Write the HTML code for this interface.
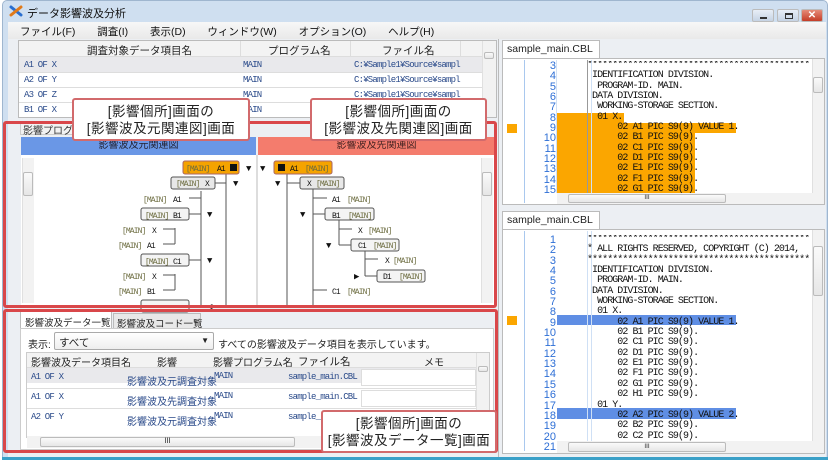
<!DOCTYPE html>
<html><head><meta charset="utf-8">
<style>
*{margin:0;padding:0;box-sizing:border-box}
body{width:832px;height:468px;background:#fff;position:relative;overflow:hidden;font-family:"Liberation Sans","Noto Sans CJK JP",sans-serif;font-size:10px;color:#222}
.a{position:absolute}
.mono{font-family:"Liberation Mono","Noto Sans CJK JP",monospace;font-size:9px;letter-spacing:-0.8px;color:#2a4a8a;line-height:11px}
.red{border:3px solid #d9474a;border-radius:3px}
.call{background:#fff;border:2px solid #d26a6c;border-radius:3px;font-size:13.5px;line-height:17px;text-align:center;color:#222;letter-spacing:0.5px}
.hd{background:#f3f3f3;border-bottom:1px solid #ddd;font-size:10px;color:#333}
.code{font-family:"Liberation Mono",monospace;font-size:10px;letter-spacing:-0.95px;line-height:10.35px;white-space:pre;color:#111}
.ln{font-family:"Liberation Sans",sans-serif;font-size:11px;line-height:10.35px;color:#2e6fd6;text-align:right;width:20px}
.sb{background:#f2f2f2;border-left:1px solid #e0e0e0}
.th{background:linear-gradient(#fafafa,#e6e6e6);border:1px solid #bbb;border-radius:2px}
</style></head><body>
<div class="a" style="left:2px;top:0;width:826px;height:460px;background:#cfdff0;border:1px solid #9fb6cf;border-radius:5px 5px 0 0"></div>
<svg class="a" style="left:9px;top:5px" width="14" height="12"><g stroke-width="3" stroke-linecap="round"><line x1="2" y1="2" x2="12" y2="10" stroke="#2a6fd0"/><line x1="12" y1="2" x2="2" y2="10" stroke="#e07a1a"/></g></svg>
<div class="a" style="left:27px;top:5px;font-size:11px;color:#111">データ影響波及分析</div>
<div class="a th" style="left:752px;top:9px;width:22px;height:13px;background:linear-gradient(#e8eef6,#c5d3e4)"><div class="a" style="left:7px;top:7px;width:7px;height:2px;background:#333"></div></div>
<div class="a th" style="left:777px;top:9px;width:22px;height:13px;background:linear-gradient(#e8eef6,#c5d3e4)"><div class="a" style="left:7px;top:3px;width:8px;height:6px;border:1px solid #333;border-top-width:2px"></div></div>
<div class="a th" style="left:801px;top:9px;width:22px;height:13px;background:linear-gradient(#e58a78,#c43d28);color:#fff;font-size:10px;text-align:center;line-height:11px;font-weight:bold">✕</div>
<div class="a" style="left:8px;top:22px;width:818px;height:17px;background:linear-gradient(#f7f7f7,#e9e9e9)"></div>
<div class="a" style="left:20px;top:24px;font-size:10.5px;color:#111;word-spacing:8px;white-space:pre">ファイル(F)  調査(I)  表示(D)  ウィンドウ(W)  オプション(O)  ヘルプ(H)</div>
<div class="a" style="left:8px;top:39px;width:818px;height:418px;background:#eceff3"></div>
<div class="a" style="left:18px;top:40px;width:479px;height:78px;background:#fff;border:1px solid #bbb"></div>
<div class="a hd" style="left:19px;top:41px;width:463px;height:16px"></div>
<div class="a" style="left:87px;top:43px;font-size:10.5px">調査対象データ項目名</div>
<div class="a" style="left:268px;top:43px;font-size:10.5px">プログラム名</div>
<div class="a" style="left:382px;top:43px;font-size:10.5px">ファイル名</div>
<div class="a" style="left:240px;top:41px;width:1px;height:16px;background:#ddd"></div>
<div class="a" style="left:350px;top:41px;width:1px;height:16px;background:#ddd"></div>
<div class="a" style="left:460px;top:41px;width:1px;height:16px;background:#ddd"></div>
<div class="a" style="left:19px;top:57px;width:463px;height:15px;background:#e9e9ec"></div>
<div class="a" style="left:19px;top:72px;width:463px;height:1px;background:#ddd"></div>
<div class="a" style="left:19px;top:87px;width:463px;height:1px;background:#ddd"></div>
<div class="a" style="left:19px;top:102px;width:463px;height:1px;background:#ddd"></div>
<div class="a mono" style="left:24px;top:60px">A1 OF X</div><div class="a mono" style="left:243px;top:60px">MAIN</div><div class="a mono" style="left:354px;top:60px">C:¥Sample1¥Source¥sampl</div>
<div class="a mono" style="left:24px;top:75px">A2 OF Y</div><div class="a mono" style="left:243px;top:75px">MAIN</div><div class="a mono" style="left:354px;top:75px">C:¥Sample1¥Source¥sampl</div>
<div class="a mono" style="left:24px;top:90px">A3 OF Z</div><div class="a mono" style="left:243px;top:90px">MAIN</div><div class="a mono" style="left:354px;top:90px">C:¥Sample1¥Source¥sampl</div>
<div class="a mono" style="left:24px;top:105px">B1 OF X</div><div class="a mono" style="left:243px;top:105px">MAIN</div>
<div class="a sb" style="left:482px;top:41px;width:14px;height:76px"></div>
<div class="a th" style="left:484px;top:52px;width:10px;height:7px"></div>
<div class="a" style="left:8px;top:120px;width:488px;height:188px;background:#eceff3"></div>
<div class="a" style="left:20px;top:121px;width:60px;height:14px;font-size:10px;color:#333;background:#f2f2f2;border:1px solid #ccc;padding-left:2px">影響プログラ</div>
<div class="a" style="left:21px;top:137px;width:235px;height:18px;background:#6a97e6;text-align:center;font-size:10px;line-height:18px;color:#223">影響波及元関連図</div>
<div class="a" style="left:258px;top:137px;width:237px;height:18px;background:#f47c6d;text-align:center;font-size:10px;line-height:18px;color:#422">影響波及先関連図</div>
<div class="a" style="left:21px;top:155px;width:474px;height:150px;background:#fff"></div>
<div class="a" style="left:256px;top:155px;width:2px;height:150px;background:#ddd"></div>
<div class="a sb" style="left:22px;top:158px;width:12px;height:145px"></div>
<div class="a th" style="left:23px;top:172px;width:10px;height:24px"></div>
<div class="a sb" style="left:481px;top:158px;width:12px;height:145px"></div>
<div class="a th" style="left:482px;top:172px;width:10px;height:24px"></div>
<svg class="a" style="left:0;top:0" width="832" height="468" font-family="Liberation Mono, monospace" font-size="8" letter-spacing="-0.9">
<g stroke="#555" stroke-width="1" fill="none">
<line x1="201" y1="191" x2="201" y2="305"/><line x1="226" y1="174" x2="226" y2="305"/>
<line x1="175" y1="228" x2="175" y2="244"/><line x1="175" y1="274" x2="175" y2="290"/>
<line x1="189" y1="198" x2="201" y2="198"/><line x1="189" y1="214" x2="201" y2="214"/><line x1="189" y1="260" x2="201" y2="260"/>
<line x1="215" y1="183" x2="226" y2="183"/>
<line x1="163" y1="229" x2="175" y2="229"/><line x1="163" y1="244" x2="175" y2="244"/>
<line x1="163" y1="275" x2="175" y2="275"/><line x1="163" y1="290" x2="175" y2="290"/>
<line x1="287" y1="174" x2="287" y2="305"/><line x1="313" y1="189" x2="313" y2="305"/>
<line x1="287" y1="183" x2="300" y2="183"/>
<line x1="313" y1="198" x2="327" y2="198"/><line x1="313" y1="214" x2="325" y2="214"/>
<line x1="313" y1="290" x2="327" y2="290"/>
<line x1="339" y1="220" x2="339" y2="245"/><line x1="339" y1="229" x2="352" y2="229"/><line x1="339" y1="245" x2="351" y2="245"/>
<line x1="365" y1="251" x2="365" y2="276"/><line x1="365" y1="259" x2="378" y2="259"/><line x1="365" y1="276" x2="377" y2="276"/>
</g>
<g stroke="#555" fill="#f4f4f4">
<rect x="171" y="177" width="44" height="12" rx="2" fill="#e8e8e8"/>
<rect x="141" y="208" width="48" height="12" rx="2"/>
<rect x="141" y="254" width="48" height="12" rx="2"/>
<rect x="141" y="300" width="48" height="12" rx="2"/>
<rect x="300" y="177" width="44" height="12" rx="2" fill="#e8e8e8"/>
<rect x="325" y="208" width="49" height="12" rx="2"/>
<rect x="351" y="239" width="48" height="12" rx="2"/>
<rect x="377" y="270" width="48" height="12" rx="2"/>
</g>
<rect x="183" y="161" width="56" height="13" rx="2" fill="#f5a300" stroke="#a66"/>
<rect x="274" y="161" width="58" height="13" rx="2" fill="#f5a300" stroke="#a66"/>
<rect x="230" y="164" width="7" height="7" fill="#111"/><rect x="278" y="164" width="7" height="7" fill="#111"/>
<g fill="#111" font-size="9" letter-spacing="0">
<text x="246" y="171">▼</text><text x="260" y="171">▼</text>
<text x="233" y="186">▼</text><text x="275" y="186">▼</text>
<text x="207" y="217">▼</text><text x="300" y="217">▼</text>
<text x="207" y="263">▼</text><text x="326" y="248">▼</text>
<text x="354" y="279">▶</text><text x="207" y="309">◀</text>
</g>
<g fill="#6b6b3e">
<text x="186" y="171">[MAIN]</text><text x="176" y="186">[MAIN]</text><text x="143" y="202">[MAIN]</text>
<text x="145" y="218">[MAIN]</text><text x="122" y="233">[MAIN]</text><text x="118" y="248">[MAIN]</text>
<text x="145" y="264">[MAIN]</text><text x="122" y="279">[MAIN]</text><text x="118" y="294">[MAIN]</text>
<text x="305" y="171">[MAIN]</text><text x="316" y="186">[MAIN]</text><text x="347" y="202">[MAIN]</text>
<text x="348" y="218">[MAIN]</text><text x="368" y="233">[MAIN]</text><text x="373" y="248">[MAIN]</text>
<text x="393" y="263">[MAIN]</text><text x="399" y="279">[MAIN]</text><text x="347" y="294">[MAIN]</text>
</g>
<g fill="#111">
<text x="217" y="171">A1</text><text x="205" y="186">X</text><text x="173" y="202">A1</text>
<text x="173" y="218">B1</text><text x="152" y="233">X</text><text x="147" y="248">A1</text>
<text x="173" y="264">C1</text><text x="152" y="279">X</text><text x="147" y="294">B1</text>
<text x="290" y="171">A1</text><text x="307" y="186">X</text><text x="332" y="202">A1</text>
<text x="332" y="218">B1</text><text x="358" y="233">X</text><text x="358" y="248">C1</text>
<text x="385" y="263">X</text><text x="383" y="279">D1</text><text x="332" y="294">C1</text>
</g>
</svg>
<div class="a" style="left:20px;top:311px;width:92px;height:17px;background:#fff;border:1px solid #bbb;border-bottom:none;font-size:9.5px;padding:3px 0 0 4px;white-space:nowrap">影響波及データ一覧</div>
<div class="a" style="left:113px;top:313px;width:88px;height:15px;background:#e8e8e8;border:1px solid #bbb;border-bottom:none;font-size:9.5px;padding:2px 0 0 3px;white-space:nowrap">影響波及コード一覧</div>
<div class="a" style="left:20px;top:328px;width:474px;height:122px;background:#fff;border:1px solid #ccc"></div>
<div class="a" style="left:28px;top:336px;font-size:10px">表示:</div>
<div class="a" style="left:54px;top:332px;width:160px;height:18px;background:linear-gradient(#fff,#eee);border:1px solid #aaa;border-radius:2px;font-size:10.5px;padding:2px 0 0 4px">すべて<span style="position:absolute;right:4px;top:3px;font-size:8px">▼</span></div>
<div class="a" style="left:218px;top:336px;font-size:10px">すべての影響波及データ項目を表示しています。</div>
<div class="a" style="left:26px;top:352px;width:464px;height:86px;border:1px solid #ccc;background:#fff"></div>
<div class="a hd" style="left:27px;top:353px;width:449px;height:15px"></div>
<div class="a" style="left:31px;top:354px;font-size:10px">影響波及データ項目名</div>
<div class="a" style="left:157px;top:354px;font-size:10px">影響</div>
<div class="a" style="left:213px;top:354px;font-size:10px">影響プログラム名</div>
<div class="a" style="left:298px;top:354px;font-size:10.5px">ファイル名</div>
<div class="a" style="left:424px;top:354px;font-size:10px">メモ</div>
<div class="a" style="left:27px;top:368px;width:449px;height:15px;background:#e9e9ec"></div>
<div class="a" style="left:27px;top:388px;width:449px;height:1px;background:#ddd"></div>
<div class="a" style="left:27px;top:408px;width:449px;height:1px;background:#ddd"></div>
<div class="a" style="left:361px;top:369px;width:115px;height:17px;background:#fff;border:1px solid #ddd"></div>
<div class="a" style="left:361px;top:390px;width:115px;height:17px;background:#fff;border:1px solid #ddd"></div>
<div class="a mono" style="left:31px;top:372px">A1 OF X</div><div class="a" style="left:127px;top:373px;font-size:10px;color:#2a4a8a">影響波及元調査対象</div><div class="a mono" style="left:214px;top:371px">MAIN</div><div class="a mono" style="left:288px;top:372px">sample_main.CBL</div>
<div class="a mono" style="left:31px;top:392px">A1 OF X</div><div class="a" style="left:127px;top:393px;font-size:10px;color:#2a4a8a">影響波及先調査対象</div><div class="a mono" style="left:214px;top:391px">MAIN</div><div class="a mono" style="left:288px;top:392px">sample_main.CBL</div>
<div class="a mono" style="left:31px;top:412px">A2 OF Y</div><div class="a" style="left:127px;top:413px;font-size:10px;color:#2a4a8a">影響波及元調査対象</div><div class="a mono" style="left:214px;top:411px">MAIN</div><div class="a mono" style="left:288px;top:412px">sample_</div>
<div class="a sb" style="left:476px;top:353px;width:13px;height:84px"></div>
<div class="a th" style="left:478px;top:366px;width:10px;height:6px"></div>
<div class="a" style="left:27px;top:436px;width:295px;height:12px;background:#f2f2f2"></div>
<div class="a th" style="left:40px;top:437px;width:255px;height:10px;font-size:7px;text-align:center;line-height:8px">Ⅲ</div>
<div class="a red" style="left:3px;top:121px;width:494px;height:187px"></div>
<div class="a red" style="left:3px;top:309px;width:495px;height:144px"></div>
<div class="a call" style="left:72px;top:98px;width:178px;height:43px;padding-top:3px">[影響個所]画面の<br>[影響波及元関連図]画面</div>
<div class="a call" style="left:310px;top:98px;width:177px;height:43px;padding-top:3px">[影響個所]画面の<br>[影響波及先関連図]画面</div>
<div class="a call" style="left:321px;top:410px;width:176px;height:43px;padding-top:3px">[影響個所]画面の<br>[影響波及データ一覧]画面</div>
<div class="a" style="left:498px;top:39px;width:1px;height:418px;background:#bbb"></div>
<div class="a" style="left:502px;top:40px;width:98px;height:18px;background:#fff;border:1px solid #bbb;border-bottom:none;font-size:10.5px;padding:2px 0 0 4px;color:#222">sample_main.CBL <span style="display:inline-block;width:10px;height:10px;border:1px solid #999;font-size:7px;line-height:8px;text-align:center;background:#eee">✕</span></div>
<div class="a" style="left:502px;top:58px;width:323px;height:147px;background:#fff;border:1px solid #bbb"></div>
<div class="a" style="left:502px;top:211px;width:98px;height:18px;background:#fff;border:1px solid #bbb;border-bottom:none;font-size:10.5px;padding:2px 0 0 4px;color:#222">sample_main.CBL <span style="display:inline-block;width:10px;height:10px;border:1px solid #999;font-size:7px;line-height:8px;text-align:center;background:#eee">✕</span></div>
<div class="a" style="left:502px;top:229px;width:323px;height:225px;background:#fff;border:1px solid #bbb"></div>
<div class="a" style="left:557px;top:113px;width:67px;height:10px;background:#fba600"></div>
<div class="a" style="left:557px;top:123px;width:179px;height:10px;background:#fba600"></div>
<div class="a" style="left:557px;top:133px;width:138px;height:60px;background:#fba600"></div>
<div class="a" style="left:507px;top:124px;width:10px;height:9px;background:#fba600"></div>
<div class="a" style="left:524px;top:60px;width:1px;height:143px;background:#a9c8ee"></div>
<div class="a" style="left:556px;top:60px;width:1px;height:133px;background:#cfe0f5"></div>
<div class="a" style="left:587px;top:60px;width:1px;height:133px;background:#999"></div>
<div class="a" style="left:591px;top:60px;width:1px;height:133px;background:#cfe0f5"></div>
<div class="a ln" style="left:536px;top:61px">3<br>4<br>5<br>6<br>7<br>8<br>9<br>10<br>11<br>12<br>13<br>14<br>15</div>
<div class="a code" style="left:587px;top:61px;width:225px;overflow:hidden">********************************************
 IDENTIFICATION DIVISION.
  PROGRAM-ID. MAIN.
 DATA DIVISION.
  WORKING-STORAGE SECTION.
  01 X.
      02 A1 PIC S9(9) VALUE 1.
      02 B1 PIC S9(9).
      02 C1 PIC S9(9).
      02 D1 PIC S9(9).
      02 E1 PIC S9(9).
      02 F1 PIC S9(9).
      02 G1 PIC S9(9).</div>
<div class="a sb" style="left:812px;top:59px;width:12px;height:134px"></div>
<div class="a th" style="left:813px;top:77px;width:10px;height:16px"></div>
<div class="a" style="left:557px;top:193px;width:267px;height:11px;background:#f2f2f2"></div>
<div class="a th" style="left:568px;top:194px;width:158px;height:9px;font-size:6px;text-align:center;line-height:7px">Ⅲ</div>
<div class="a" style="left:557px;top:315px;width:179px;height:10px;background:#5f8ee4"></div>
<div class="a" style="left:557px;top:408px;width:179px;height:11px;background:#5f8ee4"></div>
<div class="a" style="left:507px;top:316px;width:10px;height:9px;background:#fba600"></div>
<div class="a" style="left:524px;top:231px;width:1px;height:220px;background:#a9c8ee"></div>
<div class="a" style="left:587px;top:231px;width:1px;height:210px;background:#cfe0f5"></div>
<div class="a" style="left:591px;top:231px;width:1px;height:210px;background:#cfe0f5"></div>
<div class="a ln" style="left:536px;top:235px">1<br>2<br>3<br>4<br>5<br>6<br>7<br>8<br>9<br>10<br>11<br>12<br>13<br>14<br>15<br>16<br>17<br>18<br>19<br>20<br>21</div>
<div class="a code" style="left:587px;top:235px;width:225px;height:206px;overflow:hidden">********************************************
* ALL RIGHTS RESERVED, COPYRIGHT (C) 2014,
********************************************
 IDENTIFICATION DIVISION.
  PROGRAM-ID. MAIN.
 DATA DIVISION.
  WORKING-STORAGE SECTION.
  01 X.
      02 A1 PIC S9(9) VALUE 1.
      02 B1 PIC S9(9).
      02 C1 PIC S9(9).
      02 D1 PIC S9(9).
      02 E1 PIC S9(9).
      02 F1 PIC S9(9).
      02 G1 PIC S9(9).
      02 H1 PIC S9(9).
  01 Y.
      02 A2 PIC S9(9) VALUE 2.
      02 B2 PIC S9(9).
      02 C2 PIC S9(9).
      02 D2 PIC S9(9).</div>
<div class="a sb" style="left:812px;top:230px;width:12px;height:211px"></div>
<div class="a th" style="left:813px;top:246px;width:10px;height:50px"></div>
<div class="a" style="left:557px;top:441px;width:267px;height:12px;background:#f2f2f2"></div>
<div class="a th" style="left:568px;top:442px;width:158px;height:10px;font-size:6px;text-align:center;line-height:8px">Ⅲ</div>
<div class="a" style="left:2px;top:457px;width:826px;height:3px;background:#3aa0c8"></div>
</body></html>
